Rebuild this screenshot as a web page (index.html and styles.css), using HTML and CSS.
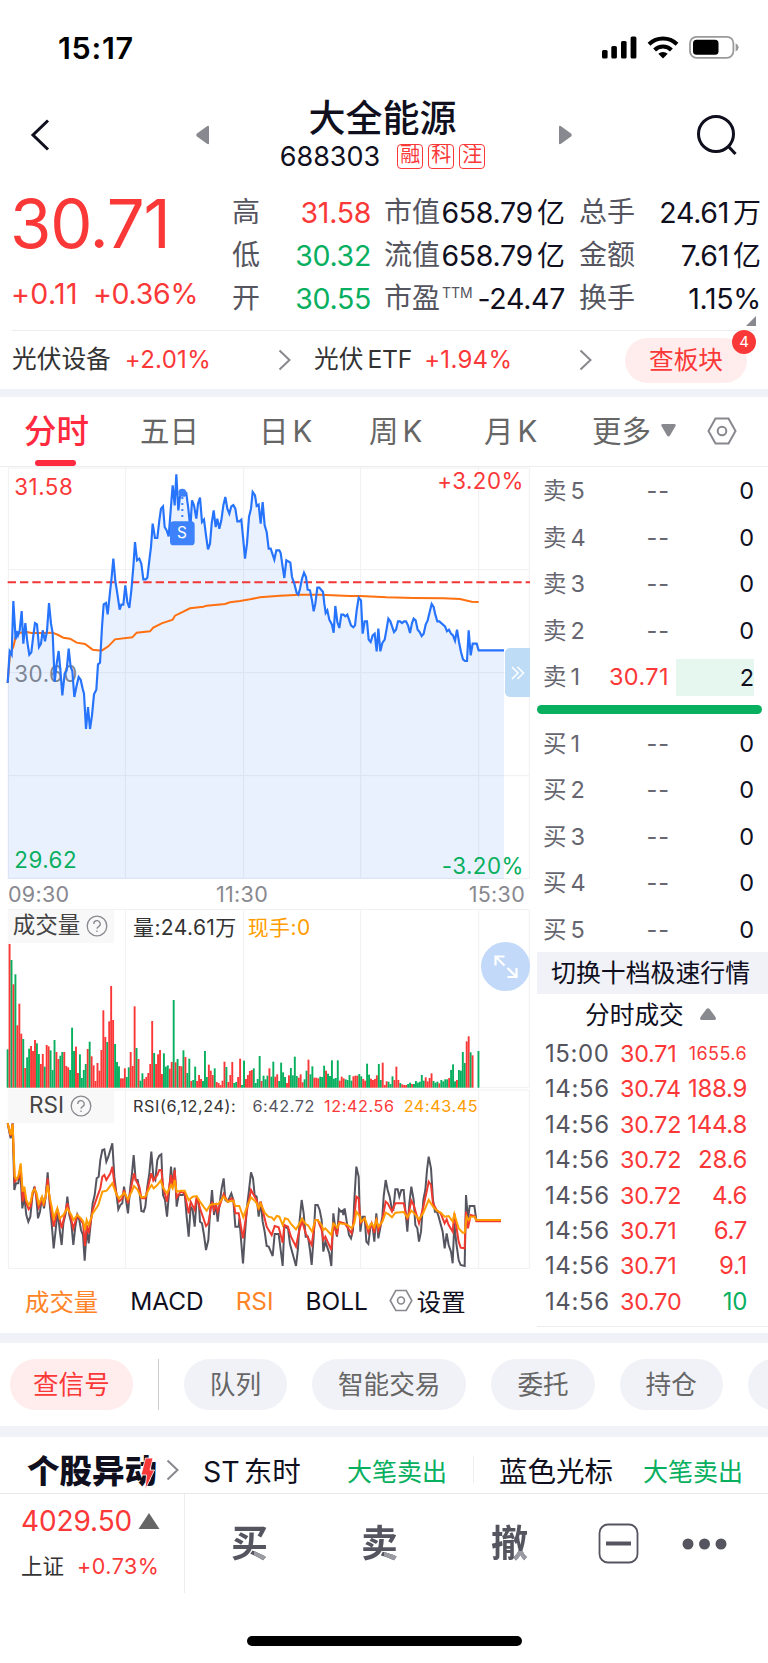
FILE: index.html
```html
<!DOCTYPE html>
<html lang="zh-CN">
<head>
  <meta charset="UTF-8">
  <title>大全能源 688303</title>
  <link rel="stylesheet" href="styles.css">
</head>
<body>

  <div class="status-bar">
    <span class="clock">15:17</span>
    <svg class="status-icons" width="138" height="26" viewBox="601 34 138 26">
      <rect x="602" y="50" width="5.6" height="8.5" rx="1.5"/>
      <rect x="611.3" y="46" width="5.6" height="12.5" rx="1.5"/>
      <rect x="621" y="41" width="5.6" height="17.5" rx="1.5"/>
      <rect x="630.6" y="36.5" width="5.8" height="22" rx="1.5"/>
      <g fill="none" stroke="#000" stroke-width="4">
        <path d="M649 44.2a20 20 0 0 1 28 0"/>
        <path d="M654.6 50a12 12 0 0 1 16.8 0"/>
      </g>
      <path d="M658.3 53.8a7 7 0 0 1 9.4 0l-4.7 4.8z"/>
      <rect x="690" y="36.8" width="43.4" height="21" rx="6.5" fill="none" stroke="#9a9a9a" stroke-width="1.8"/>
      <rect x="693" y="39.8" width="25.5" height="15" rx="3.5"/>
      <path d="M735.6 43.2q3 1.4 3 4.1t-3 4.1z" fill="#9a9a9a"/>
    </svg>
  </div>

  <header class="header">
    <svg class="back" width="20" height="34" viewBox="0 0 20 34"><path d="M18 2.5 3 17l15 14.5"/></svg>
    <svg class="tri" width="13" height="20" viewBox="0 0 13 20"><path d="M13 2v16q0 2-2 .8L1 11.500q-1.500-1.500 0-3L11 1.200Q13 0 13 2z"/></svg>
    <div class="title">
      <h1>大全能源</h1>
      <div class="code">
        <span class="num">688303</span>
        <span class="mark">融</span><span class="mark">科</span><span class="mark">注</span>
      </div>
    </div>
    <svg class="tri" width="13" height="20" viewBox="0 0 13 20"><path d="M0 2v16q0 2 2 .8L12 11.500q1.500-1.500 0-3L2 1.200Q0 0 0 2z"/></svg>
    <svg class="search" width="42" height="42" viewBox="0 0 42 42"><circle cx="20" cy="20" r="17.500"/><path d="M32 32l7.500 8"/></svg>
  </header>

  <section class="quote">
    <div class="price">
      <div class="last">30.71</div>
      <div class="change"><span class="diff">+0.11</span><span>+0.36%</span></div>
    </div>
    <dl class="stats">
      <dt>高</dt><dd class="red">31.58</dd>
      <dt>市值</dt><dd>658.79<i>亿</i></dd>
      <dt>总手</dt><dd>24.61<i>万</i></dd>
      <dt>低</dt><dd class="green">30.32</dd>
      <dt>流值</dt><dd>658.79<i>亿</i></dd>
      <dt>金额</dt><dd>7.61<i>亿</i></dd>
      <dt>开</dt><dd class="green">30.55</dd>
      <dt>市盈<sup>TTM</sup></dt><dd>-24.47</dd>
      <dt>换手</dt><dd>1.15%</dd>
    </dl>
    <span class="corner"></span>
  </section>

  <section class="sectors">
    <div class="sector">
      <span>光伏设备</span><b>+2.01%</b>
      <svg class="arrow" width="13" height="22" viewBox="0 0 13 22"><path d="M1.500 1.500 11.500 11l-10 9.500"/></svg>
    </div>
    <div class="sector">
      <span>光伏<i>ETF</i></span><b>+1.94%</b>
      <svg class="arrow" width="13" height="22" viewBox="0 0 13 22"><path d="M1.500 1.500 11.500 11l-10 9.500"/></svg>
    </div>
    <div class="board">查板块<span class="count">4</span></div>
  </section>

  <nav class="tabs">
    <a class="active">分时</a>
    <a>五日</a>
    <a>日<i>K</i></a>
    <a>周<i>K</i></a>
    <a>月<i>K</i></a>
    <a>更多<svg class="caret" width="15" height="13" viewBox="0 0 15 13"><path d="M2 0h11q2.500 0 1.500 2L9 11.500q-1.500 2-3 0L.5 2Q-.5 0 2 0z"/></svg></a>
    <svg class="hex" width="30" height="28" viewBox="0 0 30 28"><path d="M8.500 1.500h13L28.500 14l-7 12.500h-13L1.500 14z"/><circle cx="15" cy="14" r="4.300"/></svg>
  </nav>

  <main class="main">
    <div class="charts">
      <div class="panel">
        <svg class="chart" width="530" height="412" viewBox="0 20 1590 1236">
          <path class="grid" d="M25 23H1588M25 328H1588M25 637H1588M25 946H1588M25 1254H1588M25 23V1254M376 23V1254M731 23V1254M1082 23V1254M1436 23V1254M1588 23V1254"/>
          <text class="axis muted" x="43" y="664">30.60</text>
          <polygon id="priceArea" class="area"/>
          <path class="prev" d="M23 366H1590"/>
          <polyline id="avgLine" class="avg"/>
          <polyline id="priceLine" class="line"/>
          <path class="dots" d="M547 110V180"/>
          <circle class="dot" cx="547" cy="97" r="12"/>
          <rect class="flag" x="510" y="183" width="74" height="72" rx="11"/>
          <text class="flag-text" x="546" y="234">S</text>
          <text class="axis up" x="43" y="105">31.58</text>
          <text class="axis up end" x="1572" y="87">+3.20%</text>
          <text class="axis down" x="43" y="1223">29.62</text>
          <text class="axis down end" x="1572" y="1241">-3.20%</text>
        </svg>
        <span class="fold"><svg width="14" height="14" viewBox="0 0 14 14"><path d="M1 1l6 6-6 6M6.500 1l6 6-6 6"/></svg></span>
      </div>
      <div class="times"><span>09:30</span><span>11:30</span><span>15:30</span></div>
      <div class="panel">
        <div class="legend">
          <span class="name">成交量<svg class="help" width="22" height="22" viewBox="0 0 22 22"><circle cx="11" cy="11" r="9.800"/><path d="M7.800 9a3.200 3.200 0 1 1 4.800 2.600q-1.600.9-1.600 2.200M11 15.500v1.600"/></svg></span>
          <span class="dark vol">量:24.61<i>万</i></span><span class="orange vol">现手:0</span>
        </div>
        <svg class="chart" width="530" height="180" viewBox="0 207 1590 540">
          <path class="grid" d="M25 209H1588M25 743H1588M25 209V743M376 212V743M731 212V743M1082 212V743M1436 212V743M1588 209V743"/>
          <g id="volume"></g>
        </svg>
        <span class="expand"><svg width="24" height="24" viewBox="0 0 24 24"><path d="M10.500 1.500h-9v9M1.500 1.500l9 9M22.500 13v9h-9M22.500 22l-9-9"/></svg></span>
      </div>
      <div class="panel">
        <div class="legend rsi">
          <span class="name">RSI<svg class="help" width="22" height="22" viewBox="0 0 22 22"><circle cx="11" cy="11" r="9.800"/><path d="M7.800 9a3.200 3.200 0 1 1 4.800 2.600q-1.600.9-1.600 2.200M11 15.500v1.600"/></svg></span>
          <span class="dark">RSI(6,12,24):</span><span class="slate">6:42.72</span><span class="red">12:42.56</span><span class="orange">24:43.45</span>
        </div>
        <svg class="chart" width="530" height="180" viewBox="0 747 1590 540">
          <path class="grid" d="M25 750H1588M25 1285H1588M25 750V1285M376 750V1288M731 750V1288M1082 750V1288M1436 750V1288M1588 750V1285"/>
          <polyline id="rsi6" class="rsi-line" stroke="#555560"/>
          <polyline id="rsi12" class="rsi-line" stroke="#f0392f"/>
          <polyline id="rsi24" class="rsi-line" stroke="#ff9d00"/>
        </svg>
      </div>
      <div class="indicators">
        <a class="on">成交量</a><a>MACD</a><a class="on">RSI</a><a class="boll">BOLL</a>
        <a><svg class="hex" width="24" height="23" viewBox="0 0 30 28"><path d="M8.500 1.500h13L28.500 14l-7 12.500h-13L1.500 14z"/><circle cx="15" cy="14" r="4.300"/></svg>设置</a>
      </div>
    </div>

    <aside class="book">
      <div class="level"><span>卖<i>5</i></span><em>--</em><b>0</b></div>
      <div class="level"><span>卖<i>4</i></span><em>--</em><b>0</b></div>
      <div class="level"><span>卖<i>3</i></span><em>--</em><b>0</b></div>
      <div class="level"><span>卖<i>2</i></span><em>--</em><b>0</b></div>
      <div class="level best"><span>卖<i>1</i></span><em class="red">30.71</em><b>2</b></div>
      <div class="ratio"></div>
      <div class="level"><span>买<i>1</i></span><em>--</em><b>0</b></div>
      <div class="level"><span>买<i>2</i></span><em>--</em><b>0</b></div>
      <div class="level"><span>买<i>3</i></span><em>--</em><b>0</b></div>
      <div class="level"><span>买<i>4</i></span><em>--</em><b>0</b></div>
      <div class="level"><span>买<i>5</i></span><em>--</em><b>0</b></div>
      <div class="switch">切换十档极速行情</div>
      <div class="ticks-title">分时成交<svg width="16" height="12" viewBox="0 0 16 12"><path d="M6.300 1.200q1.700-2 3.400 0l5.600 7.600Q17 12 14 12H2Q-1 12 .700 8.800z"/></svg></div>
      <div class="ticks">
        <div class="tick"><span>15:00</span><em>30.71</em><b class="small">1655.6</b></div>
        <div class="tick"><span>14:56</span><em>30.74</em><b>188.9</b></div>
        <div class="tick"><span>14:56</span><em>30.72</em><b>144.8</b></div>
        <div class="tick"><span>14:56</span><em>30.72</em><b>28.6</b></div>
        <div class="tick"><span>14:56</span><em>30.72</em><b>4.6</b></div>
        <div class="tick"><span>14:56</span><em>30.71</em><b>6.7</b></div>
        <div class="tick"><span>14:56</span><em>30.71</em><b>9.1</b></div>
        <div class="tick"><span>14:56</span><em>30.70</em><b class="green">10</b></div>
      </div>
    </aside>
  </main>

  <section class="actions">
    <a class="signal">查信号</a>
    <span class="rule"></span>
    <a>队列</a><a>智能交易</a><a>委托</a><a>持仓</a><a class="cut"></a>
  </section>

  <section class="news">
    <div class="news-logo">个股异动<svg width="16" height="34" viewBox="0 0 16 34"><path d="M6.500 1H14l-3 12h4.500L6 33l1.500-15H2z"/></svg></div>
    <svg class="arrow" width="13" height="22" viewBox="0 0 13 22"><path d="M1.500 1.500 11.500 11l-10 9.500"/></svg>
    <span class="stock first"><i>ST</i>东时</span><span class="green move">大笔卖出</span>
    <span class="rule"></span>
    <span class="stock">蓝色光标</span><span class="green move">大笔卖出</span>
  </section>

  <footer class="footer">
    <div class="index">
      <div class="points">4029.50<svg width="22" height="16" viewBox="0 0 22 16"><path d="M11 0l10.500 16H.500z"/></svg></div>
      <div class="index-name"><span>上证</span><b>+0.73%</b></div>
    </div>
    <a class="trade">买</a>
    <a class="trade">卖</a>
    <a class="trade">撤</a>
    <svg class="minus" width="41" height="41" viewBox="0 0 41 41"><rect x="1.500" y="1.500" width="38" height="38" rx="8.500"/><path d="M8 20.500h25"/></svg>
    <svg class="more" width="46" height="12" viewBox="0 0 46 12"><circle cx="6" cy="6" r="5.500"/><circle cx="22.500" cy="6" r="5.500"/><circle cx="39" cy="6" r="5.500"/></svg>
  </footer>
  <div class="home-bar"></div>

  <script>
    const price = '23,668 29,573 35,583 40,422 47,537 50,512 54,525 59,510 65,452 70,550 76,488 82,545 88,583 94,576 100,525 105,488 111,492 117,560 123,550 128,510 135,543 141,512 147,428 153,490 158,518 164,665 170,610 176,572 182,640 187,705 194,640 200,630 206,565 212,620 217,632 223,710 229,680 236,650 242,658 248,685 252,700 258,806 264,740 270,806 276,765 282,702 289,688 294,612 300,607 306,500 311,432 318,428 323,462 329,405 335,350 340,295 346,362 352,400 359,448 364,433 370,433 376,375 382,425 388,443 394,390 400,320 405,245 411,300 418,295 424,310 430,357 437,357 442,352 448,300 453,260 458,190 465,233 472,233 478,180 483,145 489,138 494,200 500,210 506,228 512,150 518,75 524,135 529,42 535,150 541,100 547,95 553,105 559,100 565,145 571,205 576,120 582,135 589,175 594,130 600,112 606,185 612,178 618,225 624,267 630,250 635,190 641,150 647,200 652,175 658,205 664,180 670,135 676,110 682,145 688,160 694,138 700,134 706,145 712,183 718,183 724,178 730,240 735,295 741,250 747,170 753,145 758,95 765,105 770,137 776,133 782,190 788,125 794,195 800,215 806,265 812,265 823,298 829,270 838,270 842,278 848,320 853,353 859,300 871,307 876,350 883,370 890,398 895,403 900,385 906,355 912,337 918,350 923,388 930,390 936,420 941,453 946,430 952,382 958,382 969,395 973,430 977,458 982,450 988,478 996,493 1001,517 1006,437 1012,485 1018,503 1024,463 1030,463 1036,468 1042,463 1053,495 1060,501 1065,495 1070,450 1076,412 1083,420 1088,520 1094,483 1101,483 1106,538 1112,545 1118,525 1124,520 1130,573 1135,505 1141,573 1147,548 1154,538 1160,505 1165,475 1171,483 1182,515 1188,508 1194,483 1200,483 1206,488 1212,483 1218,483 1224,495 1230,518 1236,488 1241,475 1247,480 1253,508 1259,515 1265,527 1271,520 1277,493 1283,480 1289,455 1295,431 1301,440 1306,463 1312,483 1318,483 1335,498 1341,513 1347,508 1353,520 1359,525 1365,541 1371,508 1377,545 1383,575 1389,597 1395,602 1401,602 1406,510 1412,585 1418,550 1430,550 1436,570 1512,570';
    const avg = '23,668 30,580 40,560 47,530 60,517 80,515 95,518 125,518 158,517 175,524 190,532 210,535 230,547 255,551 278,568 305,571 325,558 345,537 397,531 410,517 450,513 460,502 485,489 518,478 525,466 550,454 570,444 610,439 620,436 675,431 690,426 720,422 750,417 780,411 840,406 900,403 960,403 1050,407 1080,407 1160,411 1240,413 1330,414 1380,416 1415,424 1436,425';
    const rsi6 = '23,850 32,895 38,850 43,1050 48,1030 55,1030 61,990 67,1105 73,1070 79,1125 85,1145 91,1130 97,1070 103,1040 108,1060 114,1135 120,1115 126,1070 132,1105 137,1070 143,997 149,1090 155,1150 161,1225 167,1170 173,1110 179,1170 185,1215 190,1150 197,1120 202,1070 208,1125 214,1150 220,1215 226,1160 232,1125 238,1140 243,1170 249,1185 254,1262 260,1170 266,1210 272,1150 278,1090 284,1065 290,1015 296,1010 301,960 307,930 313,928 319,965 325,950 331,930 337,910 343,1010 349,1060 355,1108 361,1095 367,1090 372,1040 378,1080 384,1120 390,1050 396,1000 401,945 407,1020 413,1020 418,1050 424,1113 431,1115 436,1100 442,1040 448,1000 454,935 460,1010 466,1020 472,960 478,947 484,943 489,1065 495,1080 501,1130 507,1060 513,980 518,1040 524,983 530,1100 536,1065 548,1065 554,1060 560,1130 566,1190 572,1100 578,1110 584,1160 590,1080 596,1080 600,1145 606,1150 612,1185 618,1230 625,1200 630,1120 636,1050 642,1125 648,1090 653,1145 659,1090 665,1045 671,1015 676,1080 683,1085 694,1060 700,1080 706,1160 716,1160 718,1135 724,1210 729,1270 735,1180 741,1100 747,1050 753,997 759,1015 764,1065 770,1070 776,1130 782,1085 788,1145 794,1175 800,1218 806,1220 818,1248 824,1182 836,1182 842,1230 848,1278 853,1160 864,1165 870,1212 888,1278 894,1225 899,1140 905,1080 911,1120 917,1190 924,1190 930,1230 935,1275 941,1190 946,1095 953,1095 959,1110 965,1140 970,1235 976,1205 988,1240 994,1278 1000,1120 1006,1165 1011,1190 1017,1108 1023,1115 1028,1112 1030,1125 1034,1105 1041,1150 1047,1185 1053,1195 1059,1170 1063,1080 1069,980 1076,1010 1081,1175 1087,1130 1094,1130 1099,1205 1105,1212 1112,1155 1118,1160 1123,1205 1129,1120 1135,1195 1147,1130 1151,1070 1157,1020 1163,1050 1169,1070 1176,1110 1180,1110 1186,1048 1193,1048 1198,1070 1204,1050 1211,1050 1216,1110 1222,1175 1228,1090 1234,1040 1241,1080 1246,1155 1252,1165 1257,1205 1263,1175 1270,1080 1276,1050 1281,990 1286,950 1293,985 1299,1080 1305,1115 1311,1115 1316,1130 1328,1175 1334,1225 1340,1180 1346,1215 1353,1235 1358,1270 1363,1150 1369,1210 1376,1260 1382,1275 1394,1278 1398,1065 1404,1140 1409,1098 1423,1098 1429,1140 1503,1140';
    const rsi12 = '23,850 32,888 38,851 44,1025 56,1015 62,978 68,1085 73,1050 79,1090 86,1108 92,1100 98,1058 104,1045 116,1103 122,1090 126,1070 131,1098 137,1070 143,1015 149,1080 161,1160 173,1108 185,1165 202,1090 220,1165 232,1125 249,1150 255,1218 260,1155 266,1180 278,1110 290,1075 301,1045 307,1010 313,1005 319,1020 331,1000 337,980 343,1030 349,1060 357,1085 367,1075 372,1050 384,1090 395,1035 402,1000 407,1020 418,1040 424,1074 436,1075 448,1025 454,1000 460,1022 472,1005 478,990 484,990 490,1045 501,1085 513,1005 518,1040 524,990 530,1072 542,1055 554,1060 566,1120 572,1085 584,1110 590,1070 600,1105 612,1140 618,1158 625,1150 636,1085 642,1110 648,1095 653,1115 671,1062 683,1085 694,1075 700,1080 706,1120 716,1120 729,1195 741,1110 753,1050 764,1070 770,1080 776,1110 782,1085 800,1160 815,1185 824,1158 836,1162 848,1208 853,1155 864,1160 873,1190 888,1220 896,1180 906,1142 917,1180 935,1215 946,1140 953,1140 965,1170 970,1200 976,1190 994,1230 1000,1150 1011,1185 1017,1145 1034,1150 1055,1180 1063,1130 1069,1070 1076,1075 1081,1150 1094,1135 1105,1178 1115,1150 1123,1178 1129,1135 1135,1172 1147,1140 1157,1085 1163,1090 1176,1115 1186,1090 1211,1090 1222,1140 1234,1082 1241,1095 1257,1150 1270,1100 1281,1050 1286,1025 1293,1035 1299,1090 1311,1112 1322,1120 1334,1150 1340,1138 1346,1155 1358,1175 1363,1120 1376,1205 1382,1223 1394,1225 1398,1115 1404,1165 1412,1125 1424,1128 1429,1144 1503,1144';
    const rsi24 = '23,850 32,885 38,852 44,1010 50,1018 56,1005 62,970 68,1055 73,1040 79,1080 86,1095 92,1085 98,1055 104,1048 110,1060 116,1092 122,1080 126,1070 131,1090 137,1070 143,1035 149,1070 155,1100 161,1135 172,1105 179,1135 190,1125 202,1105 214,1125 220,1140 232,1125 243,1135 250,1145 255,1170 260,1140 266,1155 278,1120 295,1095 307,1055 320,1052 337,1030 349,1062 357,1075 367,1065 373,1058 384,1078 395,1055 402,1038 412,1048 424,1072 436,1070 448,1045 455,1035 461,1045 472,1035 482,1022 490,1045 501,1060 513,1035 518,1045 524,1020 530,1055 542,1052 554,1052 566,1080 578,1070 590,1068 600,1085 612,1102 620,1112 630,1095 642,1092 655,1092 671,1070 683,1085 700,1082 706,1098 718,1098 730,1132 741,1100 753,1072 764,1082 770,1090 776,1105 782,1090 794,1118 805,1130 815,1132 822,1140 830,1128 838,1130 848,1155 855,1135 864,1138 873,1152 888,1168 896,1155 906,1136 917,1152 924,1156 936,1175 946,1140 953,1140 965,1155 970,1170 976,1165 994,1185 1000,1150 1012,1163 1017,1150 1040,1153 1055,1165 1063,1150 1069,1115 1080,1130 1083,1145 1094,1135 1105,1165 1115,1150 1123,1162 1129,1140 1135,1160 1147,1145 1157,1118 1165,1122 1176,1132 1186,1118 1211,1116 1222,1132 1234,1112 1241,1118 1257,1138 1270,1118 1286,1080 1299,1100 1311,1112 1322,1118 1334,1130 1346,1128 1358,1145 1363,1122 1376,1165 1388,1178 1394,1178 1400,1130 1406,1140 1412,1130 1424,1130 1429,1140 1503,1140';
    // one entry per minute: r = up, g = down, number = top of the bar
    const volume = 'g628 r312 g360 r433 g403 r556 r491 r581 g597 r684 g652 g626 r618 r633 r600 g610 g642 r672 r642 g680 r615 r619 g631 g690 g600 r636 r657 g647 g636 r636 r678 r682 g690 g563 g633 r620 r699 g643 g714 g690 g672 r627 g605 r649 r676 r723 r669 r692 r630 r511 r591 g606 r544 r438 r540 g612 g666 g679 r715 r715 r685 g711 g682 r636 r678 r499 g624 r657 g722 g700 r717 r711 r699 r672 r543 g639 r672 r643 r630 r702 g640 g680 g676 r686 r666 g480 r667 g657 r678 r679 g631 r651 g699 g656 r723 g720 g680 r723 r705 r717 g723 g633 g711 r674 r692 r705 g685 r726 r729 r735 r722 r665 g681 r726 r705 r666 g729 g726 r711 r656 g735 g662 r717 r705 r693 r690 g685 g729 g717 g648 r723 g707 g718 g707 r685 g710 g665 r710 r703 g723 g668 g697 g711 r729 r706 g684 g706 g650 g708 r713 r703 r727 g718 g692 r659 g703 g679 r713 r713 r715 g710 g711 g677 r692 g701 g708 g661 g716 g714 g661 r722 r710 r715 g718 g720 g705 g722 r709 r707 r707 g702 g709 r717 r722 g671 g704 r716 r720 r717 r706 g672 g720 r668 r735 r724 g725 g732 g709 r720 r680 r720 g729 r733 r735 r735 g732 g728 r732 g732 g723 g728 g725 g705 g722 r712 r724 r714 r700 g723 g728 g725 r730 g720 g724 g718 g718 r714 g690 g673 g724 r720 g690 g692 g636 g669 r604 r589 g637 r646 g743 g743 g633';

    function setPoints(id, points) {
      document.getElementById(id).setAttribute('points', points);
    }

    setPoints('priceLine', price);
    setPoints('priceArea', price + ' 1512,1256 23,1256');
    setPoints('avgLine', avg);
    setPoints('rsi6', rsi6);
    setPoints('rsi12', rsi12);
    setPoints('rsi24', rsi24);

    document.getElementById('volume').innerHTML = volume.split(' ').map((bar, i) => {
      const top = Number(bar.slice(1));
      const color = bar[0] === 'r' ? '#fb3838' : '#07af5f';
      return `<rect x="${(20 + i * 5.861).toFixed(1)}" y="${top}" width="5.7" height="${743 - top}" fill="${color}"/>`;
    }).join('');
  </script>
</body>
</html>
```
FILE: styles.css
```css
* {
  box-sizing: border-box;
}

body {
  margin: 0;
  width: 768px;
  height: 1663px;
  overflow: hidden;
  background: #fff;
  color: #0f0f1e;
  font-family: Inter, "Noto Sans CJK SC", sans-serif;
  font-weight: 400;
}

i, em, b {
  font-style: normal;
  font-weight: 400;
}

svg {
  display: block;
  flex: none;
}

.red { color: #fb3838; }
.green { color: #07af5f; }
.orange { color: #ff9d00; }
.dark { color: #333; }
.slate { color: #555560; }

/* status bar */
.status-bar {
  display: flex;
  justify-content: space-between;
  height: 80px;
  padding: 34px 29px 0 58px;
}

.clock {
  font-size: 30.5px;
  line-height: 27px;
  font-weight: 600;
  letter-spacing: 0.7px;
  color: #000;
}

/* header */
.header {
  display: grid;
  grid-template-columns: 196px 13px 1fr 13px 196px;
  align-items: center;
  height: 110px;
}

.back {
  margin-left: 30px;
  fill: none;
  stroke: #0f0f1e;
  stroke-width: 3;
}

.tri {
  fill: #88888f;
}

.title {
  padding: 3px 3px 0 0;
  text-align: center;
}

.title h1 {
  margin: 0;
  font-size: 37px;
  line-height: 43px;
  font-weight: 500;
}

.code {
  display: flex;
  justify-content: center;
  align-items: center;
  gap: 5px;
  height: 37px;
  padding-bottom: 3px;
}

.num {
  margin-right: 12px;
  font-size: 27px;
}

.mark {
  width: 26px;
  height: 25px;
  border: 1.5px solid #fb3838;
  border-radius: 4px;
  color: #fb3838;
  font-size: 20px;
  line-height: 21px;
}

.search {
  justify-self: end;
  margin-right: 30px;
  fill: none;
  stroke: #0f0f1e;
  stroke-width: 3;
}

/* quote */
.quote {
  position: relative;
  display: grid;
  grid-template-columns: 232px 1fr;
  height: 140px;
  margin-right: 8px;
  padding-top: 1px;
}

.price {
  color: #fb3838;
}

.last {
  margin-left: 10px;
  font-size: 67px;
  line-height: 66px;
  letter-spacing: -1.2px;
}

.change {
  display: flex;
  gap: 15px;
  margin-left: 11px;
  font-size: 28.5px;
  line-height: 74px;
  letter-spacing: -0.3px;
}

.change .diff {
  letter-spacing: 0.4px;
}

.stats {
  display: grid;
  grid-template-columns: 30px 109px 13px 56px 125px 14px 56px 126px;
  grid-template-rows: repeat(3, 43px);
  margin: 0;
  font-size: 28.5px;
  line-height: 43px;
  white-space: nowrap;
}

.stats dt {
  color: #555560;
  font-size: 28px;
}

.stats dt:nth-of-type(3n + 1) { grid-column: 1; }
.stats dt:nth-of-type(3n + 2) { grid-column: 4; }
.stats dt:nth-of-type(3n) { grid-column: 7; }

.stats dd {
  margin: 0;
  text-align: right;
  letter-spacing: -0.3px;
}

.stats dd i {
  margin-left: 4px;
  font-size: 28px;
  letter-spacing: 0;
}

.stats sup {
  display: inline-block;
  width: 0;
  height: 20px;
  margin-left: 2px;
  font-size: 14px;
  line-height: 12px;
  vertical-align: 10px;
}

.corner {
  position: absolute;
  right: 4px;
  bottom: 4px;
  border-left: 10px solid transparent;
  border-bottom: 10px solid #88888f;
}

/* sectors */
.sectors {
  display: grid;
  grid-template-columns: 302px 301px 10px 122px;
  align-items: center;
  height: 59px;
  margin: 0 12px;
  border-top: 1px solid #ededf0;
  color: #333;
  font-size: 24.7px;
  line-height: 40px;
}

.sector {
  display: flex;
  align-items: center;
}

.sector span {
  margin-top: -3px;
}

.sector i {
  margin-left: 4px;
  letter-spacing: -0.2px;
}

.sector b {
  margin: -1px 0 0 14px;
  color: #fb3838;
  font-size: 24px;
  letter-spacing: 0.3px;
}

.sector + .sector b {
  margin-left: 12px;
}

.arrow {
  margin-left: auto;
  fill: none;
  stroke: #88888f;
  stroke-width: 2;
}

.sector .arrow {
  margin-right: 23px;
}

.board {
  position: relative;
  grid-column: 4;
  height: 45px;
  border-radius: 23px;
  background: #ffeded;
  color: #fb3838;
  text-align: center;
  line-height: 44px;
}

.count {
  position: absolute;
  top: -8px;
  right: -9px;
  width: 24px;
  height: 24px;
  border-radius: 50%;
  background: #fb3838;
  color: #fff;
  font-size: 15px;
  line-height: 24px;
}

/* tabs */
.tabs {
  display: grid;
  grid-template-columns: 116px 119px 110px 115px 108px 113px 30px;
  align-items: center;
  height: 78px;
  padding-left: 24px;
  border-top: 8px solid #f1f2f7;
  border-bottom: 1px solid #ededf0;
  color: #666;
  font-size: 29.5px;
  line-height: 69px;
}

.tabs a {
  display: flex;
  align-items: center;
}

.tabs i {
  margin-left: 4px;
}

.tabs .active {
  position: relative;
  color: #ff2a40;
  font-size: 32.5px;
  font-weight: 500;
}

.tabs .active::after {
  content: "";
  position: absolute;
  left: 11px;
  bottom: 0;
  width: 41px;
  height: 6px;
  border-radius: 3px;
  background: #ff2a40;
}

.caret {
  margin: -3px 0 0 10px;
  fill: #88888f;
}

.tabs .hex {
  margin: -2px 0 0 2px;
}

.hex {
  fill: none;
  stroke: #88888f;
  stroke-width: 2;
}

/* charts */
.main {
  display: grid;
  grid-template-columns: 537px 1fr;
  height: 866px;
}

.panel {
  position: relative;
  width: 530px;
}

.grid {
  fill: none;
  stroke: #f0f0f2;
  stroke-width: 3;
}

.area {
  fill: #2471ff;
  fill-opacity: 0.1;
}

.line {
  fill: none;
  stroke: #2673fc;
  stroke-width: 6.5;
}

.avg {
  fill: none;
  stroke: #ff7010;
  stroke-width: 6;
}

.prev {
  stroke: #f23535;
  stroke-width: 6;
  stroke-dasharray: 25 12;
}

.dots {
  stroke: #3d82fb;
  stroke-width: 6;
  stroke-dasharray: 6 12;
}

.dot,
.flag {
  fill: #3d82fb;
}

.flag-text {
  fill: #fff;
  font-size: 46px;
  text-anchor: middle;
}

.axis {
  font-size: 67px;
  letter-spacing: 1.5px;
}

.axis.end {
  text-anchor: end;
}

.axis.up { fill: #fb3838; }
.axis.down { fill: #07af5f; }
.axis.muted { fill: #888; }

.fold {
  position: absolute;
  right: 0;
  top: 181px;
  display: grid;
  place-items: center;
  width: 25px;
  height: 49px;
  border-radius: 5px 0 0 5px;
  background: #bedcf6;
}

.fold svg,
.expand svg {
  fill: none;
  stroke: #fff;
  stroke-width: 1.5;
}

.times {
  display: grid;
  grid-template-columns: 208px 1fr auto;
  width: 530px;
  height: 30px;
  padding: 0 5px 0 8px;
  color: #88888f;
  font-size: 21.5px;
  line-height: 31px;
  letter-spacing: 0.3px;
}

.legend {
  position: absolute;
  left: 8px;
  top: 0;
  display: flex;
  align-items: center;
  height: 34px;
  font-size: 21px;
}

.name {
  display: flex;
  align-items: center;
  justify-content: center;
  gap: 6px;
  width: 106px;
  height: 33px;
  margin-right: 19px;
  padding: 0 1px 2px 0;
  background: #f8f8f8;
  color: #444;
  font-size: 22.5px;
  line-height: 28px;
}

.help {
  margin-top: 1px;
  fill: none;
  stroke: #88888f;
  stroke-width: 1.3;
}

.vol {
  margin-right: 11px;
  letter-spacing: 0.4px;
}

.legend.rsi {
  font-size: 16.2px;
  letter-spacing: 0.6px;
}

.rsi .name {
  letter-spacing: 0;
}

.rsi .slate { margin-left: 16px; }
.rsi .red,
.rsi .orange { margin-left: 9px; }

.expand {
  position: absolute;
  right: 0;
  top: 33px;
  display: grid;
  place-items: center;
  width: 49px;
  height: 49px;
  border-radius: 50%;
  background: #c3d9f9;
}

.expand svg {
  stroke-width: 2.2;
}

.rsi-line {
  fill: none;
  stroke-width: 6;
}

.indicators {
  display: flex;
  align-items: center;
  height: 63px;
  padding-left: 25px;
  font-size: 24.4px;
}

.indicators a {
  display: flex;
  align-items: center;
  gap: 4px;
  margin-right: 32px;
}

.indicators .boll {
  margin-right: 21px;
}

.indicators .on {
  color: #ff8427;
}

/* order book */
.level {
  display: grid;
  grid-template-columns: 54px 71px 8px 78px;
  height: 46.5px;
  padding-left: 6px;
  color: #666670;
  font-size: 23.5px;
  line-height: 48px;
}

.level i {
  margin-left: 4px;
}

.level em {
  margin-right: -2px;
  text-align: right;
  letter-spacing: 1px;
}

.level .red {
  margin-right: -1px;
  color: #fb3838;
  letter-spacing: 0.4px;
}

.level b {
  grid-column: 4;
  color: #0f0f1e;
  text-align: right;
}

.best b {
  align-self: center;
  height: 37px;
  background: #e6f7ef;
  line-height: 37px;
}

.ratio {
  width: 225px;
  height: 9px;
  margin: 5px 0 6px;
  border-radius: 5px;
  background: #07af5f;
}

.switch {
  height: 42px;
  padding-left: 14px;
  background: #f1f2f8;
  font-size: 24.9px;
  line-height: 42px;
}

.ticks-title {
  display: flex;
  align-items: center;
  gap: 16px;
  height: 41px;
  padding: 0 0 3px 48px;
  font-size: 24.7px;
}

.ticks-title svg {
  margin-top: 2px;
  fill: #88888f;
}

.ticks {
  height: 292px;
  border-bottom: 1px solid #ededf0;
}

.tick {
  display: grid;
  grid-template-columns: 75px 62px 1fr;
  height: 35.4px;
  padding: 0 21px 0 8px;
  color: #fb3838;
  font-size: 24px;
  line-height: 37px;
}

.tick span {
  color: #555560;
  letter-spacing: 0.6px;
}

.tick em {
  font-size: 23.3px;
  letter-spacing: -0.2px;
}

.tick b {
  text-align: right;
  letter-spacing: -0.3px;
}

.tick .small {
  font-size: 18px;
  letter-spacing: 0.4px;
}

.tick .green {
  color: #07af5f;
}

/* quick actions */
.actions {
  display: flex;
  align-items: center;
  height: 93px;
  padding-left: 10px;
  border-top: 10px solid #f1f2f7;
  overflow: hidden;
}

.actions a {
  flex: none;
  height: 51px;
  margin-right: 25px;
  padding: 0 26px;
  border-radius: 26px;
  background: #f1f2f7;
  color: #666;
  font-size: 25.6px;
  line-height: 51px;
}

.actions .signal {
  padding: 0 23px;
  background: #ffeded;
  color: #fb3838;
}

.actions .cut {
  width: 104px;
  margin: 0;
}

.actions .rule {
  flex: none;
  width: 1px;
  height: 51px;
  margin-right: 25px;
  background: #ccc;
}

/* news */
.news {
  display: flex;
  align-items: center;
  height: 68px;
  padding: 9px 0 0 27px;
  border-top: 11px solid #f1f2f7;
  border-bottom: 1px solid #e8e8ea;
  white-space: nowrap;
}

.news-logo {
  position: relative;
  margin-top: 4px;
  font-size: 32.5px;
  font-weight: 900;
  line-height: 44px;
}

.news-logo svg {
  position: absolute;
  right: 2px;
  top: 7px;
  fill: #fb3838;
  stroke: #fff;
  stroke-width: 0.8;
}

.news .arrow {
  margin: 1px 24px 0 9px;
}

.stock {
  width: 144px;
  font-size: 28.5px;
}

.stock i {
  margin-right: 4px;
}

.move {
  font-size: 25px;
}

.news .rule {
  width: 1px;
  height: 27px;
  margin: 0 25px 0 26px;
  background: #ededf0;
}

/* footer */
.footer {
  display: flex;
  align-items: center;
  height: 99px;
}

.index {
  width: 185px;
  height: 99px;
  padding: 5px 0 0 21px;
  border-right: 1px solid #ededf0;
}

.points {
  display: flex;
  align-items: center;
  gap: 6px;
  color: #fb3838;
  font-size: 28px;
  line-height: 44px;
  letter-spacing: -0.1px;
}

.points svg {
  fill: #666;
}

.index-name {
  display: flex;
  gap: 13px;
  color: #333;
  font-size: 21.5px;
  line-height: 47px;
}

.index-name b {
  color: #fb3838;
  letter-spacing: 0.5px;
}

/* the last stroke of each glyph is lighter */
.trade {
  width: 130px;
  padding-left: 46px;
  font-size: 37px;
  font-weight: 700;
  line-height: 99px;
  color: transparent;
  background:
    linear-gradient(#9a9aa2, #9a9aa2) 69px 57px / 16px 14px no-repeat,
    #555560;
  -webkit-background-clip: text;
  background-clip: text;
}

.minus {
  margin-left: 23px;
  fill: none;
  stroke: #555560;
  stroke-width: 1.8;
}

.minus path {
  stroke-width: 4;
}

.more {
  margin-left: 43px;
  fill: #555560;
}

.home-bar {
  width: 275px;
  height: 10px;
  margin: 43px auto 0;
  border-radius: 5px;
  background: #000;
}
```
